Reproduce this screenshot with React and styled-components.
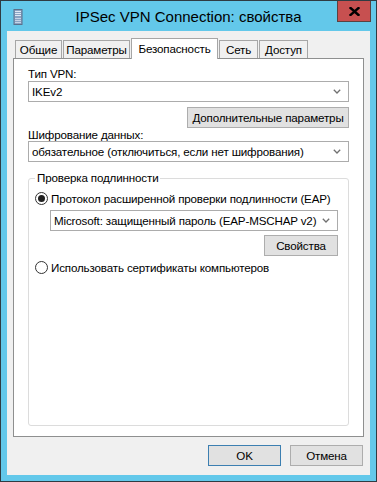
import React from 'react';
import styled, { createGlobalStyle } from 'styled-components';

const Global = createGlobalStyle`
  * { box-sizing: border-box; }
  body {
    margin: 0;
    background: #fff;
    font-family: "Liberation Sans", Arial, sans-serif;
    font-size: 11.6px;
    letter-spacing: -0.15px;
    color: #000;
  }
`

const Window = styled.div`
  width: 377px;
  height: 482px;
  border: 1px solid #2f3b42;
  background: #63c8ea;
  display: flex;
  flex-direction: column;
`

const TitleBar = styled.div`
  height: 30px;
  display: grid;
  grid-template-columns: 1fr auto 1fr;
  align-items: center;
`

const AppIcon = styled.div`
  padding-left: 12px;
  padding-top: 1px;
  display: flex;
`

const Title = styled.div`
  font-size: 15px;
  letter-spacing: 0;
  line-height: 20px;
  padding-top: 1px;
`

const CloseButton = styled.button`
  justify-self: end;
  align-self: start;
  margin-right: 5px;
  width: 34px;
  height: 21px;
  padding: 0;
  background: #c75050;
  border: 1px solid #5b4141;
  border-top: none;
  display: flex;
  align-items: center;
  justify-content: center;
`

const Client = styled.div`
  flex: 1;
  margin: 0 6px 6px 6px;
  background: #f0f0f0;
  padding: 7px 6px 0 6px;
  display: flex;
  flex-direction: column;
`

const TabRow = styled.div`
  display: flex;
  align-items: flex-end;
  height: 21px;
  padding-left: 2px;
`

const Tab = styled.div`
  width: ${({ $w }) => $w}px;
  height: ${({ $active }) => ($active ? 21 : 19)}px;
  margin-right: 1px;
  border: 1px solid #a6a6a6;
  border-bottom: none;
  background: ${({ $active }) => ($active ? '#fff' : '#f0f0f0')};
  position: ${({ $active }) => ($active ? 'relative' : 'static')};
  z-index: ${({ $active }) => ($active ? 2 : 'auto')};
  display: flex;
  justify-content: center;
  padding-top: ${({ $active }) => ($active ? 3 : 2)}px;
  line-height: 14px;
  white-space: nowrap;
`

const Panel = styled.div`
  position: relative;
  z-index: 1;
  margin-top: -1px;
  height: 379px;
  background: #fff;
  border: 1px solid #8e8f8f;
  padding: 7px 14px 0 14px;
  display: flex;
  flex-direction: column;
`

const Label = styled.div`
  line-height: ${({ $lh }) => $lh || 15}px;
`

const Select = styled.div`
  height: 21px;
  min-width: 0;
  margin-left: ${({ $ml }) => $ml || 0}px;
  margin-top: ${({ $mt }) => $mt || 0}px;
  border: 1px solid #acacac;
  background: #fff;
  display: flex;
  align-items: center;
  gap: 4px;
  padding: 0 7px 0 3px;
  white-space: nowrap;
`

const SelectText = styled.span`
  flex: 1;
  min-width: 0;
  overflow: hidden;
`

const ButtonRow = styled.div`
  display: flex;
  justify-content: flex-end;
  gap: ${({ $gap }) => $gap || 0}px;
  margin-top: ${({ $mt }) => $mt || 0}px;
  margin-right: ${({ $mr }) => $mr || 0}px;
`

const Button = styled.button`
  width: ${({ $w }) => $w}px;
  height: 21px;
  padding: 0;
  font: inherit;
  letter-spacing: inherit;
  white-space: nowrap;
  color: #000;
  background: #e1e1e1;
  border: 1px solid ${({ $default }) => ($default ? '#3c7fb1' : '#adadad')};
`

const Group = styled.div`
  margin-top: 16px;
  height: 248px;
  min-width: 0;
  border: 1px solid #dcdcdc;
  border-radius: 3px;
  padding: 0 10px 0 6px;
  display: flex;
  flex-direction: column;
`

const Legend = styled.div`
  align-self: flex-start;
  margin-top: -8px;
  padding: 0 2px;
  line-height: 14px;
  background: #fff;
`

const RadioRow = styled.label`
  display: flex;
  align-items: center;
  gap: 3px;
  height: 14px;
  margin-top: ${({ $mt }) => $mt || 0}px;
  white-space: nowrap;
`

const RadioCircle = styled.span`
  flex: none;
  width: 13px;
  height: 13px;
  border-radius: 50%;
  border: 1px solid #333;
  background: #fff;
  display: flex;
  align-items: center;
  justify-content: center;

  &::after {
    content: '';
    width: 7px;
    height: 7px;
    border-radius: 50%;
    background: ${({ $on }) => ($on ? '#222' : 'transparent')};
  }
`

function Chevron() {
  return (
    <svg width="8" height="5" viewBox="0 0 8 5">
      <path d="M0.8 0.8 L4 4 L7.2 0.8" fill="none" stroke="#707070" strokeWidth="1.3" />
    </svg>
  )
}

function Combo({ children, ...rest }) {
  return (
    <Select {...rest}>
      <SelectText>{children}</SelectText>
      <Chevron />
    </Select>
  )
}

function ServerIcon() {
  return (
    <svg width="10" height="16" viewBox="0 0 10 16">
      <rect x="1" y="0.5" width="8" height="15" fill="#8aa4c4" stroke="#5c6f8a" />
      <rect x="2" y="2" width="6" height="1" fill="#dfe8f4" />
      <rect x="2" y="4" width="6" height="1" fill="#dfe8f4" />
      <rect x="2" y="6" width="6" height="1" fill="#dfe8f4" />
      <rect x="2" y="9" width="6" height="1" fill="#c6d3e6" />
      <rect x="2" y="11" width="6" height="1" fill="#c6d3e6" />
      <rect x="2" y="13" width="6" height="1" fill="#c6d3e6" />
    </svg>
  )
}

function CloseGlyph() {
  return (
    <svg width="11" height="9" viewBox="0 0 11 9">
      <path d="M1.5 1 L9.5 8 M9.5 1 L1.5 8" stroke="#000" strokeWidth="2.4" strokeLinecap="square" />
    </svg>
  )
}

const tabs = [
  { name: 'Общие', w: 47 },
  { name: 'Параметры', w: 67 },
  { name: 'Безопасность', w: 87, active: true },
  { name: 'Сеть', w: 39 },
  { name: 'Доступ', w: 49 },
];

export default function App() {
  return (
    <>
      <Global />
      <Window>
        <TitleBar>
          <AppIcon><ServerIcon /></AppIcon>
          <Title>IPSec VPN Connection: свойства</Title>
          <CloseButton><CloseGlyph /></CloseButton>
        </TitleBar>
        <Client>
          <TabRow>
            {tabs.map((t) => (
              <Tab key={t.name} $w={t.w} $active={t.active}>{t.name}</Tab>
            ))}
          </TabRow>
          <Panel>
            <Label>Тип VPN:</Label>
            <Combo>IKEv2</Combo>
            <ButtonRow $mt={5}>
              <Button $w={162}>Дополнительные параметры</Button>
            </ButtonRow>
            <Label $lh={13}>Шифрование данных:</Label>
            <Combo>обязательное (отключиться, если нет шифрования)</Combo>
            <Group>
              <Legend>Проверка подлинности</Legend>
              <RadioRow $mt={6}>
                <RadioCircle $on />
                Протокол расширенной проверки подлинности (EAP)
              </RadioRow>
              <Combo $ml={15} $mt={5}>Microsoft: защищенный пароль (EAP-MSCHAP v2) (шифрование включено)</Combo>
              <ButtonRow $mt={4}>
                <Button $w={74}>Свойства</Button>
              </ButtonRow>
              <RadioRow $mt={4}>
                <RadioCircle />
                Использовать сертификаты компьютеров
              </RadioRow>
            </Group>
          </Panel>
          <ButtonRow $mt={8} $gap={9} $mr={1}>
            <Button $w={73} $default>OK</Button>
            <Button $w={73}>Отмена</Button>
          </ButtonRow>
        </Client>
      </Window>
    </>
  )
}
